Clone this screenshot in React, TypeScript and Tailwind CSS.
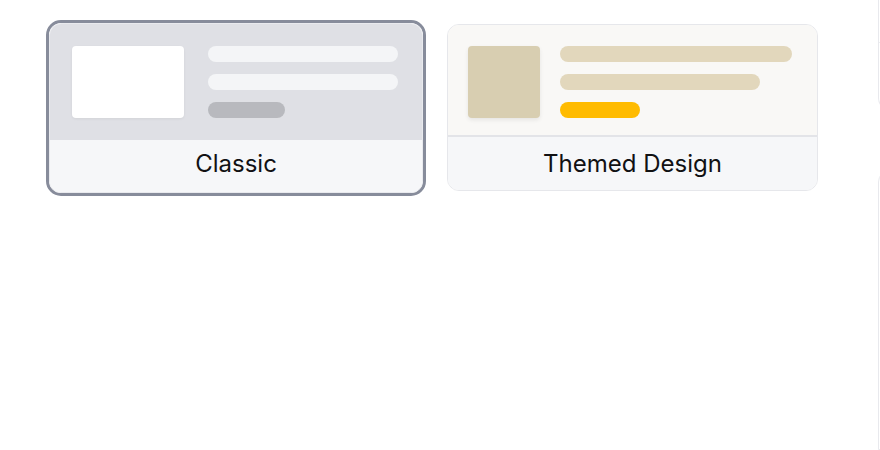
import React from "react";

export default function App() {
  return (
    <div
      className="w-[880px] h-[450px] bg-white overflow-hidden flex"
      style={{ fontFamily: "Inter, 'Noto Sans', sans-serif" }}
    >
      <div className="pl-[46px] pt-[20px] flex gap-[21px] items-start shrink-0">
        {/* Classic (selected) */}
        <div className="w-[380px] h-[176px] border-[3px] border-[#878c9b] rounded-[15px] overflow-hidden">
          <div className="h-full border border-[#e9eaee] rounded-[12px] overflow-hidden flex flex-col">
            <div className="h-[116px] bg-[#dfe0e5] pl-[22px] pt-[22px] flex gap-[24px] shrink-0">
              <div className="w-[112px] h-[72px] rounded-[4px] bg-white shadow-[0_1px_3px_rgba(0,0,0,0.06)]" />
              <div className="w-[190px] flex flex-col gap-[12px]">
                <div className="h-[16px] rounded-full bg-[#f4f5f7]" />
                <div className="h-[16px] rounded-full bg-[#f4f5f7]" />
                <div className="w-[77px] h-[16px] rounded-full bg-[#b8b9be]" />
              </div>
            </div>
            <div className="flex-1 bg-[#f6f7f9] flex items-center justify-center pb-[5px]">
              <span className="text-[24px] text-[#111113] leading-none">Classic</span>
            </div>
          </div>
        </div>

        {/* Themed Design */}
        <div className="mt-[4px] w-[371px] h-[167px] border border-[#e6e7eb] rounded-[12px] overflow-hidden flex flex-col">
          <div className="h-[112px] bg-[#f9f8f6] border-b-2 border-[#e3e4e8] pl-[20px] pt-[21px] flex gap-[20px] shrink-0">
            <div className="w-[72px] h-[72px] rounded-[4px] bg-[#d8ceb1] shadow-[0_2px_4px_rgba(0,0,0,0.08)]" />
            <div className="w-[232px] flex flex-col gap-[12px]">
              <div className="h-[16px] rounded-full bg-[#e2d7bc]" />
              <div className="w-[200px] h-[16px] rounded-full bg-[#e2d7bc]" />
              <div className="w-[80px] h-[16px] rounded-full bg-[#ffbb00]" />
            </div>
          </div>
          <div className="flex-1 bg-[#f6f7f9] flex items-center justify-center">
            <span className="text-[24px] text-[#111113] leading-none">Themed Design</span>
          </div>
        </div>
      </div>

      {/* Partially visible column at the right edge */}
      <div className="ml-[60px] w-[200px] shrink-0 flex flex-col">
        <div className="h-[118px] border border-t-0 border-[#e8e9ed] rounded-bl-[12px] flex flex-col">
          <div className="h-[43px] border-b border-[#eceef1]" />
        </div>
        <div className="mt-[60px] h-[300px] border border-[#e8e9ed] rounded-tl-[12px]" />
      </div>
    </div>
  );
}
